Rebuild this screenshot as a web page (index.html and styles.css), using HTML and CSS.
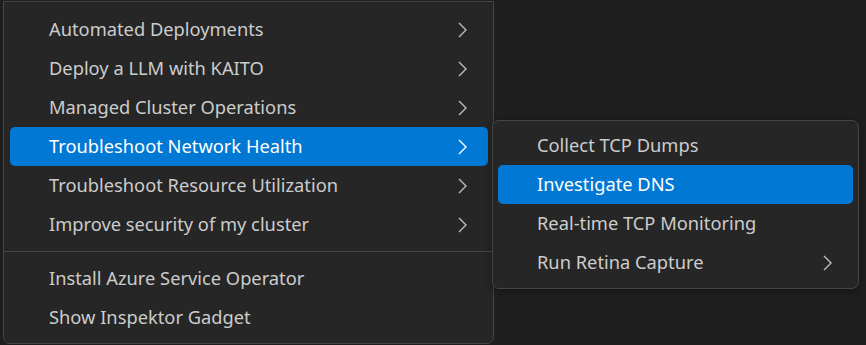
FILE: index.html
```html
<!DOCTYPE html>
<html>
<head>
<meta charset="utf-8">
<link rel="stylesheet" href="styles.css">
</head>
<body>
<div class="stage">
  <div class="menu main">
    <div class="item"><span class="label">Automated Deployments</span><svg class="chev" viewBox="0 0 9 16"><path d="M1 1 L8 8 L1 15"/></svg></div>
    <div class="item"><span class="label">Deploy a LLM with KAITO</span><svg class="chev" viewBox="0 0 9 16"><path d="M1 1 L8 8 L1 15"/></svg></div>
    <div class="item"><span class="label">Managed Cluster Operations</span><svg class="chev" viewBox="0 0 9 16"><path d="M1 1 L8 8 L1 15"/></svg></div>
    <div class="item active"><span class="label">Troubleshoot Network Health</span><svg class="chev" viewBox="0 0 9 16"><path d="M1 1 L8 8 L1 15"/></svg></div>
    <div class="item"><span class="label">Troubleshoot Resource Utilization</span><svg class="chev" viewBox="0 0 9 16"><path d="M1 1 L8 8 L1 15"/></svg></div>
    <div class="item"><span class="label">Improve security of my cluster</span><svg class="chev" viewBox="0 0 9 16"><path d="M1 1 L8 8 L1 15"/></svg></div>
    <div class="sep"></div>
    <div class="item"><span class="label">Install Azure Service Operator</span></div>
    <div class="item"><span class="label">Show Inspektor Gadget</span></div>
  </div>
  <div class="menu sub">
    <div class="item"><span class="label">Collect TCP Dumps</span></div>
    <div class="item active"><span class="label">Investigate DNS</span></div>
    <div class="item"><span class="label">Real-time TCP Monitoring</span></div>
    <div class="item"><span class="label">Run Retina Capture</span><svg class="chev" viewBox="0 0 9 16"><path d="M1 1 L8 8 L1 15"/></svg></div>
  </div>
</div>
</body>
</html>
```
FILE: styles.css
```css
html, body {
  margin: 0;
  padding: 0;
  background: #1f1f1f;
  width: 866px;
  height: 345px;
  overflow: hidden;
}
body {
  font-family: "Noto Sans", "Open Sans", sans-serif;
  font-size: 18.3px;
  color: #cccccc;
}
.stage {
  position: relative;
  padding: 1px 0 0 3px;
}
.menu {
  background: #262626;
  border: 1px solid #454545;
  box-sizing: border-box;
}
.main {
  width: 491px;
  height: 343px;
  padding: 8px 5px 6px 6px;
  border-radius: 0 0 7px 7px;
}
.sub {
  position: absolute;
  left: 492px;
  top: 120px;
  width: 367px;
  height: 169px;
  padding: 5px 5px 5px 5px;
  border-radius: 7px;
  box-shadow: 0 2px 8px rgba(0,0,0,0.35);
}
.item {
  height: 39px;
  display: flex;
  align-items: center;
  padding: 0 21px 0 39px;
  border-radius: 5px;
}
.label {
  flex: 1;
  white-space: nowrap;
  position: relative;
  top: -1px;
}
.item.active {
  background: #0078d4;
  color: #ffffff;
}
.chev {
  width: 9px;
  height: 16px;
  fill: none;
  stroke: #bdbdbd;
  stroke-width: 1.4;
}
.item.active .chev {
  stroke: #ffffff;
}
.sep {
  height: 1px;
  background: #454545;
  margin: 7px -5px 7px -6px;
}
```
